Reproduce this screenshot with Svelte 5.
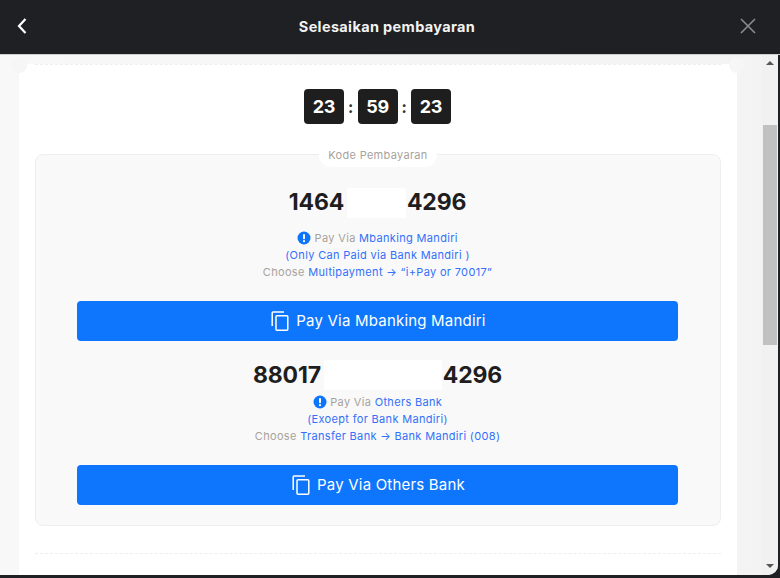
<script>
  const timer = ['23', '59', '23'];
</script>

<div class="frame">
  <header class="header">
    <svg class="back" width="12" height="18" viewBox="0 0 12 18"><path d="M9.5 2 L3 9 L9.5 16" fill="none" stroke="#fff" stroke-width="2.2"/></svg>
    <h1>Selesaikan pembayaran</h1>
    <svg class="close" width="16" height="16" viewBox="0 0 16 16"><path d="M1 1 L15 15 M15 1 L1 15" fill="none" stroke="#8a8b8e" stroke-width="1.6"/></svg>
  </header>

  <div class="viewport">
    <div class="gutter">
      <main class="card">
        <div class="dash top"><i class="notch l"></i><i class="notch r"></i></div>

        <div class="timer">
          {#each timer as t, i}
            {#if i > 0}<span class="colon">:</span>{/if}
            <span class="digit">{t}</span>
          {/each}
        </div>

        <section class="panel">
          <span class="pill">Kode Pembayaran</span>

          <div class="code first"><span>1464</span><i class="mask m1"></i><span>4296</span></div>
          <div class="info">
            <p><svg class="bang" width="14" height="14" viewBox="0 0 14 14"><circle cx="7" cy="7" r="6.5" fill="#0e76fd"/><rect x="6" y="3" width="2" height="5.2" rx="1" fill="#fff"/><circle cx="7" cy="10.2" r="1.1" fill="#fff"/></svg> Pay Via <b>Mbanking Mandiri</b></p>
            <p><b>(Only Can Paid via Bank Mandiri )</b></p>
            <p>Choose <b>Multipayment → “i+Pay or 70017”</b></p>
          </div>
          <button class="pay">
            <svg width="18" height="20" viewBox="0 0 18 20"><path d="M13 1 H2.5 A1 1 0 0 0 1.200 2 V15" fill="none" stroke="#fff" stroke-width="1.500"/><rect x="5" y="4.700" width="11.800" height="14.500" rx="1" fill="none" stroke="#fff" stroke-width="1.500"/></svg>
            Pay Via Mbanking Mandiri
          </button>

          <div class="code second"><span>88017</span><i class="mask m2"></i><span>4296</span></div>
          <div class="info tight">
            <p><svg class="bang" width="14" height="14" viewBox="0 0 14 14"><circle cx="7" cy="7" r="6.5" fill="#0e76fd"/><rect x="6" y="3" width="2" height="5.2" rx="1" fill="#fff"/><circle cx="7" cy="10.2" r="1.1" fill="#fff"/></svg> Pay Via <b>Others Bank</b></p>
            <p><b>(Exoept for Bank Mandiri)</b></p>
            <p>Choose <b>Transfer Bank → Bank Mandiri (008)</b></p>
          </div>
          <button class="pay">
            <svg width="18" height="20" viewBox="0 0 18 20"><path d="M13 1 H2.5 A1 1 0 0 0 1.200 2 V15" fill="none" stroke="#fff" stroke-width="1.500"/><rect x="5" y="4.700" width="11.800" height="14.500" rx="1" fill="none" stroke="#fff" stroke-width="1.500"/></svg>
            Pay Via Others Bank
          </button>
        </section>

        <div class="dash bottom"></div>
        <i class="dot"></i>
      </main>
    </div>

    <div class="scrollbar">
      <i class="arrow up"></i>
      <div class="track"><div class="thumb"></div></div>
      <i class="arrow down"></i>
    </div>
  </div>
</div>

<style>
  :global(body) { margin: 0; background: #1f2024; }
  .frame {
    width: 780px; height: 578px; display: flex; flex-direction: column;
    background: #1f2024; overflow: hidden;
    font-family: Inter, "Noto Sans", sans-serif;
  }
  .header {
    flex: none; height: 55px; box-sizing: border-box;
    display: flex; align-items: center; justify-content: center;
    position: relative; color: #fff;
    border-bottom: 1px solid #cfcfcf;
  }
  .header h1 { margin: 0 0 1px -6px; font-size: 14.5px; font-weight: 700; letter-spacing: 0.35px; color: #f2f2f2; }
  .back { position: absolute; left: 16px; top: 17px; }
  .close { position: absolute; left: 740px; top: 18px; }

  .viewport {
    flex: none; height: 520px; width: 778px; display: flex;
    background: #f7f7f7; overflow: hidden; border-bottom-right-radius: 10px;
  }
  .gutter { flex: none; width: 762px; padding: 0 25px 0 19px; box-sizing: border-box; background: linear-gradient(90deg,#f8f8f8 0,#f3f3f3 100%); }
  .card { position: relative; background: #fff; height: 520px; padding: 0 16px; box-sizing: border-box; }
  .dash { border-top: 1px dashed #eeeeee; }
  .dash.top { position: relative; margin-top: 9px; }
  .notch { position: absolute; top: -8px; width: 16px; height: 16px; border-radius: 50%; background: #f6f6f6; }
  .notch.l { left: -24px; }
  .notch.r { right: -24px; }

  .timer { display: flex; justify-content: center; align-items: center; margin-top: 24px; margin-left: -1px; }
  .digit {
    width: 40px; height: 35px; background: #1e1e1e; border-radius: 4px; color: #fff;
    display: flex; align-items: center; justify-content: center; font-size: 18px; font-weight: 700; letter-spacing: -0.3px;
  }
  .colon { width: 13.5px; text-align: center; font-weight: 700; font-size: 16px; color: #333; }

  .panel {
    position: relative; margin-top: 30px; height: 372px; box-sizing: border-box;
    background: #f9f9f9; border: 1px solid #eeeeee; border-radius: 8px;
    display: flex; flex-direction: column; align-items: center; padding: 0 42px 0 41px;
  }
  .pill {
    position: absolute; top: -12px; left: 50%; transform: translateX(-50%);
    height: 24px; width: 118px; background: #fff; border-radius: 12px;
    display: flex; align-items: center; justify-content: center;
    font-size: 11px; letter-spacing: 0.3px; color: #a8a29c; padding-bottom: 1px; box-sizing: border-box;
  }
  .code { display: flex; align-items: center; height: 30px; font-weight: 700; color: #1e1e1e; font-size: 23px; letter-spacing: -0.2px; }
  .code span { position: relative; top: -1px; }
  .code.second span { top: 0; }
  .code.first { margin-top: 33px; }
  .code.second { margin-top: 19px; }
  .mask { display: block; height: 30px; background: #fff; }
  .m1 { width: 59px; margin: 0 1px 0 3px; }
  .m2 { width: 118px; margin: 0 1px 0 3px; }
  .info { font-size: 11px; letter-spacing: 0.33px; line-height: 17px; text-align: center; color: #a8a29c; margin-top: 12px; }
  .info.tight { margin-top: 4px; }
  .info p { margin: 0; height: 17px; }
  .info b { font-weight: 400; color: #3270fa; }
  .bang { vertical-align: -3px; }
  .pay {
    width: 100%; height: 40px; flex: none; border: 0; border-radius: 4px; background: #0e76fd; color: #fff;
    display: flex; align-items: center; justify-content: center; gap: 7px;
    font: 400 15px Inter, "Noto Sans", sans-serif; letter-spacing: 0.2px; padding: 0 0 2px 2px;
    margin-top: 20px;
  }
  .pay svg { margin-top: 2px; }
  .dash.bottom { margin-top: 27px; }
  .dot { position: absolute; left: 684px; bottom: -6px; width: 14px; height: 8px; border-radius: 50%; background: #0a2a66; }

  .scrollbar { flex: none; width: 16px; background: #f1f1f1; position: relative; display: flex; flex-direction: column; }
  .track { flex: 1; position: relative; }
  .thumb { position: absolute; left: 1px; right: 1px; top: 70px; height: 220px; background: #c1c1c1; }
  .arrow { position: absolute; left: 4px; width: 0; height: 0; border-left: 4px solid transparent; border-right: 4px solid transparent; }
  .arrow.up { top: 6px; border-bottom: 4px solid #555; }
  .arrow.down { bottom: 7px; border-top: 4px solid #555; }
</style>
